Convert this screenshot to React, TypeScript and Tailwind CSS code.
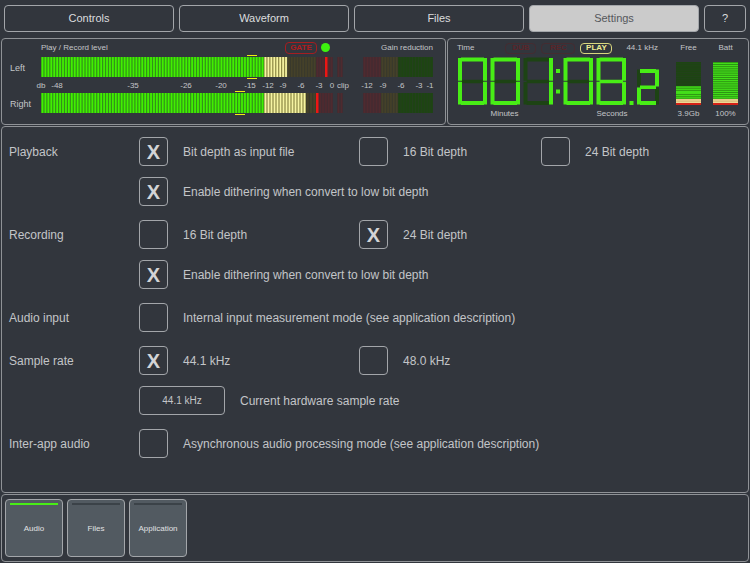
import { useId, useState } from "react";

const SEGMENTS: Record<string, string> = {
  "0": "abcdef",
  "1": "bc",
  "2": "abdeg",
  "8": "abcdefg",
};

function Digit({ x, y, w, h, value }: { x: number; y: number; w: number; h: number; value: string }) {
  const t = 4;
  const half = h / 2;
  const rects: Record<string, [number, number, number, number]> = {
    a: [x + t - 1, y, w - 2 * t + 2, 4],
    g: [x + t - 1, y + half - 1.5, w - 2 * t + 2, 3.5],
    d: [x + t - 1, y + h - 4, w - 2 * t + 2, 4],
    f: [x, y + 0.5, t, half - 1],
    b: [x + w - t, y + 0.5, t, half - 1],
    e: [x, y + half + 0.5, t, half - 1],
    c: [x + w - t, y + half + 0.5, t, half - 1],
  };
  const names = Object.keys(rects);
  const lit = (s: string) => SEGMENTS[value].includes(s);
  return (
    <g>
      {[false, true].map((on) =>
        names
          .filter((s) => lit(s) === on)
          .map((s) => {
            const [rx, ry, rw, rh] = rects[s];
            return <rect key={s} x={rx} y={ry} width={rw} height={rh} fill={on ? "#48ed16" : "#1d4314"} />;
          }),
      )}
    </g>
  );
}

function Clock() {
  return (
    <svg viewBox="0 0 203 50" className="block w-full" role="img" aria-label="Time 001:08.2">
      <Digit x={1} y={1.5} w={29} h={47.5} value="0" />
      <Digit x={33.5} y={1.5} w={29.5} h={47.5} value="0" />
      <Digit x={66.5} y={1.5} w={29.5} h={47.5} value="1" />
      <rect x="99" y="13" width="4" height="4" fill="#48ed16" />
      <rect x="99" y="33.500" width="4" height="4" fill="#48ed16" />
      <Digit x={106.5} y={1.5} w={29.5} h={47.5} value="0" />
      <Digit x={139.5} y={1.5} w={29.5} h={47.5} value="8" />
      <rect x="172.500" y="45" width="4" height="4" fill="#48ed16" />
      <Digit x={180} y={13} w={22} h={36} value="2" />
    </svg>
  );
}

const STEP = 2.92;

function Bars({ from, to, y, color, line }: { from: number; to: number; y: number; color: string; line: string }) {
  const count = Math.round((to - from) / STEP);
  const step = (to - from) / count;
  return (
    <g>
      <rect x={from} y={y} width={to - from} height="20" fill={line} />
      {Array.from({ length: count }, (_, i) => (
        <rect key={i} x={from + i * step + 0.6} y={y} width={step - 1.2} height="20" fill={color} />
      ))}
    </g>
  );
}

function Channel({ y, lit, peak, mark }: { y: number; lit: number; peak: number; mark: number }) {
  return (
    <g>
      <Bars from={32} to={255} y={y} color="#41f000" line="#32901a" />
      <Bars from={255} to={lit} y={y} color="#f6f4a2" line="#8b8643" />
      <Bars from={lit} to={307} y={y} color="#454129" line="#39392c" />
      <Bars from={307} to={324} y={y} color="#4f2a2f" line="#422c32" />
      <Bars from={328} to={334} y={y} color="#4f2a2f" line="#3a2f35" />
      <rect x={peak} y={y} width="2.500" height="20" fill="#ee1614" />
      <rect x={mark} y={y - 2} width="10" height="1" fill="#f0ee10" />
      <rect x={mark} y={y + 21} width="10" height="1" fill="#f0ee10" />
      <Bars from={354} to={372} y={y} color="#4f2a2f" line="#422c32" />
      <Bars from={372} to={389} y={y} color="#454129" line="#39392c" />
      <Bars from={389} to={424} y={y} color="#1d4512" line="#23401c" />
    </g>
  );
}

const SCALE: [string, number][] = [
  ["db", 32], ["-48", 48], ["-35", 124], ["-26", 177], ["-20", 212], ["-15", 241],
  ["-12", 259], ["-9", 274], ["-6", 292], ["-3", 310], ["0", 323], ["clip", 334],
  ["-12", 358], ["-9", 374], ["-6", 392], ["-3", 410], ["-1", 421],
];

function LevelMeter() {
  return (
    <svg viewBox="0 0 424 62" className="block w-full overflow-visible" role="img" aria-label="Levels">
      <text x="1" y="17" fontSize="9" fill="#c3c5c8">Left</text>
      <text x="1" y="53" fontSize="9" fill="#c3c5c8">Right</text>
      <Channel y={3} lit={278.5} peak={316} mark={238} />
      <Channel y={39} lit={297} peak={307} mark={226} />
      {SCALE.map(([label, x], i) => (
        <text key={i} x={x} y="34" fontSize="8" textAnchor="middle" fill="#c3c5c8">{label}</text>
      ))}
    </svg>
  );
}

function Gauge({ label, value, level }: { label: string; value: string; level: number }) {
  return (
    <div className="flex w-[37px] flex-col items-center">
      <span className="h-4 leading-4">{label}</span>
      <svg viewBox="0 0 25 43" className="mt-[6px] block h-[43px] w-[25px]" role="img" aria-label={label + " " + value}>
        <rect width="25" height="43" fill="#23401c" />
        {Array.from({ length: 17 }, (_, i) => (
          <rect key={i} y={i * 2.15} width="25" height="1.300" fill="#1d4512" />
        ))}
        <rect y={37 - level} width="25" height={level} fill="#2a8a12" />
        {Array.from({ length: Math.floor(level / 2.15) }, (_, i) => (
          <rect key={i} y={35.2 - i * 2.15} width="25" height="1.300" fill="#43dd1a" />
        ))}
        {level < 30 && <rect y="30" width="25" height="1.200" fill="#43dd1a" />}
        <rect y="37" width="25" height="4.500" fill="#d9b97a" />
        <rect y="37.500" width="25" height="1" fill="#f0e09a" />
        <rect y="39.800" width="25" height="1" fill="#f0e09a" />
        <rect y="41" width="25" height="2" fill="#d42218" />
      </svg>
      <span className="mt-[1px] h-4 whitespace-nowrap leading-4">{value}</span>
    </div>
  );
}

function Choice({ type = "checkbox", name, label, checked = false, wide = false }: {
  type?: "checkbox" | "radio";
  name?: string;
  label: string;
  checked?: boolean;
  wide?: boolean;
}) {
  const id = useId();
  return (
    <div className={wide ? "col-span-3 flex items-center gap-[15px]" : "flex items-center gap-[15px]"}>
      <span className="grid size-[29px] shrink-0 place-items-center">
        <input
          id={id}
          type={type}
          name={name}
          defaultChecked={checked}
          className="peer col-start-1 row-start-1 size-[29px] appearance-none rounded-[4px] border border-[#a3a6aa]"
        />
        <span aria-hidden="true" className="pointer-events-none col-start-1 row-start-1 hidden text-xl font-bold leading-none text-[#d3d4d6] peer-checked:block">
          X
        </span>
      </span>
      <label htmlFor={id} className="whitespace-nowrap">{label}</label>
    </div>
  );
}

const ROW = "grid grid-cols-[130fr_220fr_182fr_207fr] items-center gap-y-[11px]";
const PANEL = "rounded-[4px] border border-[#8f9296] bg-[#32363d]";

function Tabs() {
  const [active, setActive] = useState("Settings");
  return (
    <nav className="flex gap-[5px] px-[4px] pt-[5px]">
      {["Controls", "Waveform", "Files", "Settings", "?"].map((tab) => (
        <button
          key={tab}
          type="button"
          onClick={() => setActive(tab)}
          className={
            "h-[27px] rounded-[4px] border border-[#a3a6aa] text-[11px] " +
            (tab === "?" ? "w-[42px] shrink-0 " : "flex-1 ") +
            (tab === active ? "bg-[#cbcbcb] text-[#55585c]" : "text-[#dcdddf]")
          }
        >
          {tab}
        </button>
      ))}
    </nav>
  );
}

export default function App() {
  const [page, setPage] = useState("Audio");
  return (
    <div className="flex min-h-screen flex-col bg-[#32363d] font-['Liberation_Sans',Arial,sans-serif] text-[#c3c5c8]">
      <Tabs />

      <div className="mt-[6px] flex gap-[1px] px-[1px] text-[8px]">
        <section className={PANEL + " flex-1 pb-[8px] pl-[7px] pr-[12px]"}>
          <header className="flex h-[15px] items-center pl-[32px] pt-[2px]">
            <span>Play / Record level</span>
            <span className="ml-auto flex h-[12px] w-[32px] items-center justify-center rounded-[4px] border border-[#a51d20] font-bold text-[#b01c1e]">
              GATE
            </span>
            <span className="ml-[4px] size-[9px] rounded-full bg-[#3df20f]" />
            <span className="ml-[51px]">Gain reduction</span>
          </header>
          <LevelMeter />
        </section>

        <section className={PANEL + " flex w-[302px] shrink-0 pl-[9px] pr-[4px]"}>
          <div className="w-[203px]">
            <header className="flex h-[17px] items-center pr-[2px] pt-[1px]">
              <span>Time</span>
              <span className="ml-auto flex h-[11px] w-[31px] items-center justify-center rounded-[4px] border border-[#452c31] font-bold text-[#5a2529]">DUB</span>
              <span className="ml-[5px] flex h-[11px] w-[34px] items-center justify-center rounded-[4px] border border-[#452c31] font-bold text-[#5a2529]">REC</span>
              <span className="ml-[5px] flex h-[11px] w-[32px] items-center justify-center rounded-[4px] border border-[#d8d67e] font-bold text-[#efed93]">PLAY</span>
              <span className="ml-[14px]">44.1 kHz</span>
            </header>
            <Clock />
            <div className="flex pt-[2px] leading-3">
              <span className="w-[95px] text-center">Minutes</span>
              <span className="flex-1 pl-[12px] text-center">Seconds</span>
            </div>
          </div>
          <div className="ml-auto flex pt-[1px]">
            <Gauge label="Free" value="3.9Gb" level={13} />
            <Gauge label="Batt" value="100%" level={37} />
          </div>
        </section>
      </div>

      <main className={PANEL + " mx-[1px] mt-[1px] flex flex-1 flex-col gap-[14px] pl-[7px] pt-[10px] text-xs"}>
        <div className={ROW}>
          <span>Playback</span>
          <Choice type="radio" name="playback" label="Bit depth as input file" checked />
          <Choice type="radio" name="playback" label="16 Bit depth" />
          <Choice type="radio" name="playback" label="24 Bit depth" />
          <span />
          <Choice wide label="Enable dithering when convert to low bit depth" checked />
        </div>
        <div className={ROW}>
          <span>Recording</span>
          <Choice type="radio" name="recording" label="16 Bit depth" />
          <Choice type="radio" name="recording" label="24 Bit depth" checked />
          <span />
          <span />
          <Choice wide label="Enable dithering when convert to low bit depth" checked />
        </div>
        <div className={ROW}>
          <span>Audio input</span>
          <Choice wide label="Internal input measurement mode (see application description)" />
        </div>
        <div className={ROW}>
          <span>Sample rate</span>
          <Choice type="radio" name="rate" label="44.1 kHz" checked />
          <Choice type="radio" name="rate" label="48.0 kHz" />
          <span />
          <span />
          <div className="col-span-3 flex items-center gap-[15px]">
            <button type="button" className="h-[29px] w-[86px] rounded-[4px] border border-[#a3a6aa] text-[10px]">
              44.1 kHz
            </button>
            <span>Current hardware sample rate</span>
          </div>
        </div>
        <div className={ROW}>
          <span>Inter-app audio</span>
          <Choice wide label="Asynchronous audio processing mode (see application description)" />
        </div>
      </main>

      <footer className={PANEL + " mx-[1px] mb-[1px] mt-[1px] flex gap-[4px] px-[3px] py-[4px]"}>
        {["Audio", "Files", "Application"].map((item) => (
          <button
            key={item}
            type="button"
            onClick={() => setPage(item)}
            className="flex size-[58px] flex-col items-center rounded-[4px] border border-[#a3a6aa] bg-[#525a61] px-[4px] pt-[3px] text-[8px] text-[#e0e1e3]"
          >
            <span className={"h-[2px] w-full " + (page === item ? "bg-[#48ed16]" : "bg-[#3b4248]")} />
            <span className="mt-[18px] leading-3">{item}</span>
          </button>
        ))}
      </footer>
    </div>
  );
}
